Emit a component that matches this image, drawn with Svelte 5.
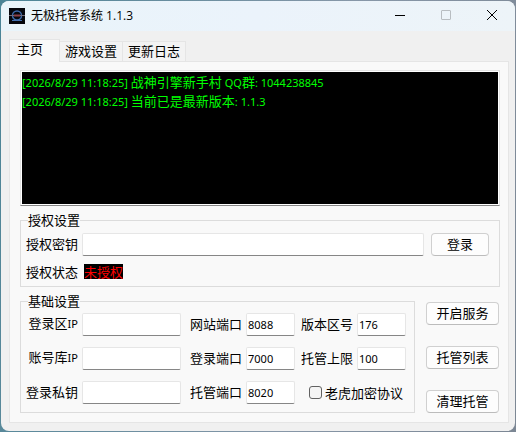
<script lang="ts">
  const tabs = ['主页', '游戏设置', '更新日志'];
  let activeTab = $state(0);

  let log = $state([
    '[2026/8/29 11:18:25] 战神引擎新手村 QQ群: 1044238845',
    '[2026/8/29 11:18:25] 当前已是最新版本: 1.1.3'
  ]);

  let licenseKey = $state('');
  let licenseStatus = $state('未授权');
  let tigerProtocol = $state(false);

  let fields = $state([
    { id: 'loginIp', label: '登录区IP', value: '' },
    { id: 'webPort', label: '网站端口', value: '8088' },
    { id: 'zone', label: '版本区号', value: '176' },
    { id: 'accountIp', label: '账号库IP', value: '' },
    { id: 'loginPort', label: '登录端口', value: '7000' },
    { id: 'limit', label: '托管上限', value: '100' },
    { id: 'privateKey', label: '登录私钥', value: '' },
    { id: 'hostPort', label: '托管端口', value: '8020' }
  ]);

  const actions = ['开启服务', '托管列表', '清理托管'];

  // split into latin and CJK runs, latin is set a bit smaller
  function runs(text: string) {
    return text.match(/[\x00-\x7f]+|[^\x00-\x7f]+/g) ?? [];
  }

  function isLatin(run: string) {
    return run.charCodeAt(0) < 128;
  }
</script>

{#snippet mixed(text: string)}
  {#each runs(text) as run}<span class:latin={isLatin(run)}>{run}</span>{/each}
{/snippet}

<div class="desktop">
  <main class="window">
    <header class="titlebar">
      <svg class="logo" viewBox="0 0 16 16" aria-hidden="true">
        <rect width="16" height="16" fill="#05060c" />
        <circle cx="8" cy="7.5" r="4.5" fill="none" stroke="#3d68a8" stroke-width="1.5" />
        <path d="M0 7.5h16" stroke="#716a78" stroke-width="1" />
        <path d="M5 7.5h6" stroke="#8b3f48" stroke-width="2" />
        <path d="M3 12.5h10" stroke="#426fae" stroke-width="1.2" />
      </svg>
      <h1>无极托管系统 1.1.3</h1>
      <div class="controls">
        <button type="button" aria-label="最小化">
          <svg viewBox="0 0 10 10"><path d="M0 5.5h10" /></svg>
        </button>
        <button type="button" aria-label="最大化" disabled>
          <svg viewBox="0 0 10 10"><rect x="0.5" y="0.5" width="9" height="9" rx="0.5" /></svg>
        </button>
        <button type="button" aria-label="关闭">
          <svg viewBox="0 0 10 10"><path d="M0 0l10 10M10 0L0 10" /></svg>
        </button>
      </div>
    </header>

    <div class="body">
      <div class="tabs" role="tablist">
        {#each tabs as tab, i (tab)}
          <button
            type="button"
            role="tab"
            class="tab"
            class:active={activeTab === i}
            aria-selected={activeTab === i}
            onclick={() => (activeTab = i)}
          >
            {tab}
          </button>
        {/each}
      </div>

      <div class="panel" role="tabpanel">
        <div class="memo">
          <div class="log" role="log">
            {#each log as line}
              <div class="line">{@render mixed(line)}</div>
            {/each}
          </div>
        </div>

        <fieldset class="license">
          <legend>授权设置</legend>
          <div class="row">
            <label for="licenseKey">授权密钥</label>
            <input id="licenseKey" type="text" bind:value={licenseKey} />
            <button type="button" class="btn login">登录</button>
          </div>
          <div class="row status">
            <span>授权状态</span>
            <output>{licenseStatus}</output>
          </div>
        </fieldset>

        <div class="bottom">
          <fieldset class="basic">
            <legend>基础设置</legend>
            <div class="grid">
              {#each fields as field (field.id)}
                <div class="pair">
                  <label for={field.id}>{@render mixed(field.label)}</label>
                  <input id={field.id} type="text" bind:value={field.value} />
                </div>
              {/each}
              <label class="check">
                <input type="checkbox" bind:checked={tigerProtocol} />
                老虎加密协议
              </label>
            </div>
          </fieldset>

          <div class="actions">
            {#each actions as action (action)}
              <button type="button" class="btn">{action}</button>
            {/each}
          </div>
        </div>
      </div>
    </div>
  </main>
</div>

<style>
  :global(body) {
    margin: 0;
  }

  .desktop {
    box-sizing: border-box;
    min-height: 100vh;
    padding: 1px;
    display: flex;
    background: linear-gradient(100deg, #4b8496, #8797a8 60%, #7c8794);
    color: #000;
    font-family: 'Noto Sans CJK SC', sans-serif;
    font-size: 13px;
    line-height: 16px;
  }

  .window {
    flex: 1;
    min-width: 0;
    display: flex;
    flex-direction: column;
    border-radius: 8px;
    overflow: hidden;
    background: #f0f0f0;
  }

  button,
  input {
    box-sizing: border-box;
    margin: 0;
    font: inherit;
    color: inherit;
  }

  .latin {
    font-family: 'Noto Sans', sans-serif;
    font-size: 11px;
    white-space: pre;
  }

  .titlebar {
    display: flex;
    align-items: center;
    height: 30px;
    padding-left: 8px;
    background: linear-gradient(90deg, #e9f4fa, #ebf3fb 50%, #edf4f8);
  }
  .logo {
    width: 16px;
    height: 16px;
  }
  h1 {
    flex: 1;
    margin: 0 0 0 6px;
    font-family: 'Open Sans', 'Noto Sans CJK SC', sans-serif;
    font-size: 12px;
    font-weight: 400;
  }

  .controls {
    display: flex;
    height: 100%;
  }
  .controls button {
    display: grid;
    place-items: center;
    width: 46px;
    padding: 0 0 2px;
    border: 0;
    background: none;
  }
  .controls svg {
    width: 10px;
    height: 10px;
    fill: none;
    stroke: #000;
    stroke-width: 1;
    overflow: visible;
  }
  .controls button:disabled svg {
    stroke: #b8bdc1;
  }

  .body {
    flex: 1;
    display: flex;
    flex-direction: column;
    padding: 8px 6px 8px 8px;
  }

  .tabs {
    display: flex;
    align-items: flex-end;
  }
  .tab {
    height: 20px;
    padding: 0 5px 2px;
    border: 1px solid #e5e5e5;
    border-width: 1px 1px 0 0;
    background: #f3f3f3;
  }
  .tab.active {
    height: 23px;
    margin-bottom: -1px;
    padding: 0 16px 4px 7px;
    border-left-width: 1px;
    background: #f9f9f9;
    z-index: 1;
  }

  .panel {
    flex: 1;
    display: flex;
    flex-direction: column;
    gap: 6px;
    padding: 8px 8px 9px 10px;
    border: 1px solid #e5e5e5;
    background: #f9f9f9;
  }

  .memo {
    flex: 1;
    display: flex;
    min-height: 60px;
    padding: 1px;
    border: 1px solid #e3e3e3;
    border-bottom-color: #868686;
    background: #fff;
  }
  .log {
    flex: 1;
    min-width: 0;
    background: #000;
    color: #0f0;
  }
  .line {
    height: 19px;
    line-height: 19px;
  }

  fieldset {
    min-width: 0;
    margin: 0;
    border: 1px solid #dcdcdc;
  }
  legend {
    margin-left: 2px;
    padding: 0;
  }
  .license {
    padding: 5px 10px 7px 5px;
  }
  .basic {
    flex: 1;
    padding: 4px 8px 8px 5px;
  }

  .row {
    display: flex;
    align-items: center;
    gap: 4px;
  }
  .row label,
  .pair label {
    padding-bottom: 2px;
  }
  .status {
    margin-top: 8px;
    line-height: 15px;
  }
  output {
    margin-left: 2px;
    background: #000;
    color: #f00;
  }

  input[type='text'] {
    flex: 1;
    min-width: 0;
    height: 23px;
    padding: 0 1px;
    border: 1px solid #e6e6e6;
    border-bottom-color: #868686;
    border-radius: 2px;
    background: #fff;
    font-family: 'Noto Sans', 'Noto Sans CJK SC', sans-serif;
    font-size: 11px;
    outline: 0;
  }

  .btn {
    height: 23px;
    padding: 0 0 2px;
    border: 1px solid #d0d0d0;
    border-bottom-color: #bcbcbc;
    border-radius: 4px;
    background: #fdfdfd;
  }
  .btn:hover {
    background: #e8f2fb;
  }
  .login {
    width: 58px;
    margin-left: 3px;
  }

  .bottom {
    display: flex;
    gap: 11px;
  }
  .grid {
    display: grid;
    grid-template-columns: 1fr 108px 105px;
    gap: 11px 6px;
  }
  .pair {
    display: flex;
    align-items: center;
    justify-content: flex-end;
    gap: 4px;
    min-width: 0;
  }
  .pair label {
    width: 52px;
    text-align: right;
    white-space: nowrap;
  }
  .pair input[type='text'] {
    flex: 0 1 49px;
  }
  .pair:nth-child(3n + 1) input[type='text'] {
    flex: 1;
  }

  .check {
    display: flex;
    align-items: center;
    justify-content: flex-end;
    gap: 3px;
    padding-right: 3px;
    white-space: nowrap;
  }
  .check input {
    appearance: none;
    width: 13px;
    height: 13px;
    border: 1px solid #626262;
    border-radius: 3px;
    background: #f5f5f5;
  }
  .check input:checked {
    border-color: #0067c0;
    background: #0067c0;
  }

  .actions {
    display: flex;
    flex-direction: column;
    justify-content: space-between;
    width: 73px;
    padding: 9px 1px 0 0;
  }
</style>
